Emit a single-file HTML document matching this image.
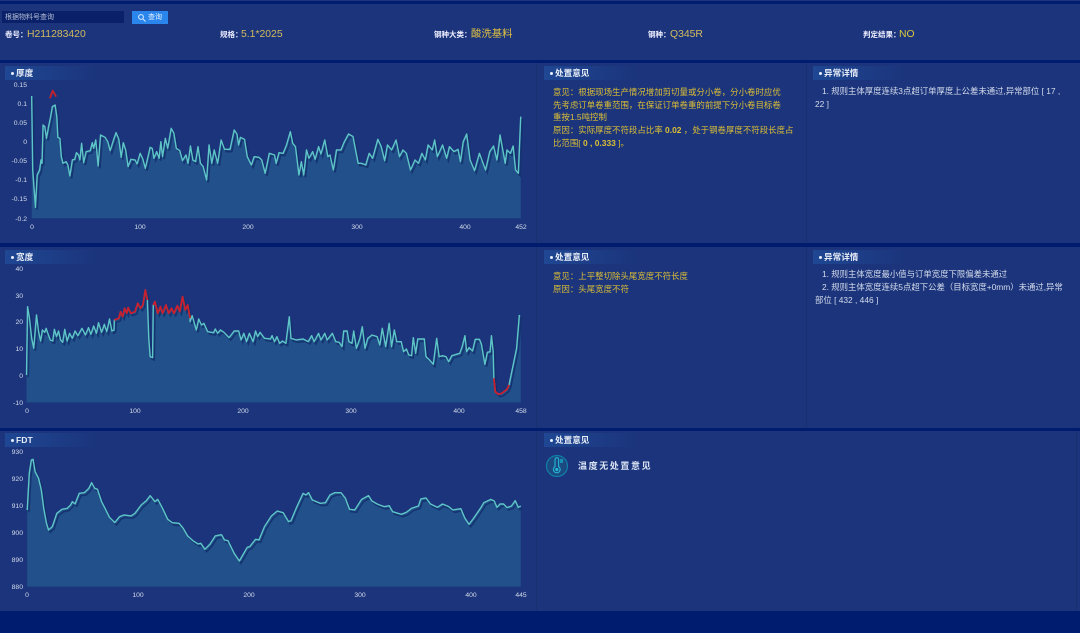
<!DOCTYPE html>
<html><head><meta charset="utf-8"><style>
html,body{margin:0;padding:0;background:#001c6e}
body{width:1080px;height:633px;overflow:hidden;position:relative;font-family:"Liberation Sans","Noto Sans CJK SC",sans-serif;color:#fff}
#w{position:absolute;left:0;top:0;width:1080px;height:633px;filter:blur(.35px)}
div{position:absolute;white-space:nowrap}
.p{background:#1b347b}
.d{background:#17306f;width:1px}
.t{height:14px;background:linear-gradient(90deg,#1f4793,#1b347b);font-size:8.6px;line-height:14px;font-weight:700;color:#e8eef8;padding-left:11px;box-sizing:border-box}
.t:before{content:"";position:absolute;left:6px;top:6px;width:3px;height:3px;border-radius:50%;background:#e8f0ff}
.k{font-size:7.5px;font-weight:700;line-height:12px;top:29px;color:#eef}
.v{font-size:10.4px;line-height:12px;top:29px;color:#d3bb5c}
.y{font-size:8.45px;line-height:12.7px;color:#dcbf36}
.w{font-size:8.4px;line-height:13px;color:#d5dcec}
svg{position:absolute;left:0;top:0}
svg text{font-family:"Liberation Sans",sans-serif;font-size:6.8px;fill:#d5dcec}
polyline{vector-effect:non-scaling-stroke}
.a{fill:#22508a}
.l{fill:none;stroke:#5fc6c8;stroke-width:1.4;stroke-linejoin:round}
.s{fill:none;stroke:#12306c;stroke-width:1.6;opacity:.85}
.r{fill:none;stroke:#c8202e;stroke-width:1.8;stroke-linejoin:round}
</style></head><body><div id="w">
<div class="p" style="left:0;top:0;width:1080px;height:1px"></div>
<div class="p" style="left:0;top:4px;width:1080px;height:56px"></div>
<div class="p" style="left:0;top:63px;width:1080px;height:180px"></div>
<div class="p" style="left:0;top:247px;width:1080px;height:181px"></div>
<div class="p" style="left:0;top:431px;width:1080px;height:180px"></div>
<div class="d" style="left:536px;top:63px;height:180px"></div>
<div class="d" style="left:806px;top:63px;height:180px"></div>
<div class="d" style="left:536px;top:247px;height:181px"></div>
<div class="d" style="left:806px;top:247px;height:181px"></div>
<div class="d" style="left:536px;top:431px;height:180px"></div>
<div class="d" style="left:1076px;top:431px;height:180px"></div>

<div style="left:2px;top:11px;width:122px;height:12px;background:#0a2068;font-size:7px;line-height:13px;color:#b4bfd8;text-indent:3px">根据物料号查询</div>
<div style="left:132px;top:11px;width:36px;height:13px;background:#2a86ec;font-size:7px;line-height:13px;color:#e8f2ff;text-indent:16px">查询
<svg width="10" height="10" style="left:5px;top:2px"><circle cx="4" cy="4" r="2.4" fill="none" stroke="#dcecff"/><path d="M6 6L8.5 8.5" stroke="#dcecff"/></svg></div>
<div class="k" style="left:5px">卷号&#xFF1A;</div><div class="v" style="left:27px">H211283420</div>
<div class="k" style="left:220px">规格&#xFF1A;</div><div class="v" style="left:241px">5.1*2025</div>
<div class="k" style="left:434px">钢种大类&#xFF1A;</div><div class="v" style="left:471px;color:#e3c340">酸洗基料</div>
<div class="k" style="left:648px">钢种&#xFF1A;</div><div class="v" style="left:670px">Q345R</div>
<div class="k" style="left:863px">判定结果&#xFF1A;</div><div class="v" style="left:899px;color:#dcc83c">NO</div>

<div class="t" style="left:5px;top:66px;width:95px">厚度</div>
<div class="t" style="left:544px;top:66px;width:95px">处置意见</div>
<div class="t" style="left:813px;top:66px;width:95px">异常详情</div>
<div class="t" style="left:5px;top:250px;width:95px">宽度</div>
<div class="t" style="left:544px;top:250px;width:95px">处置意见</div>
<div class="t" style="left:813px;top:250px;width:95px">异常详情</div>
<div class="t" style="left:5px;top:433px;width:95px">FDT</div>
<div class="t" style="left:544px;top:433px;width:95px">处置意见</div>

<div class="y" style="left:553px;top:86px">意见&#xFF1A;根据现场生产情况增加剪切量或分小卷&#xFF0C;分小卷时应优<br>先考虑订单卷重范围&#xFF0C;在保证订单卷重的前提下分小卷目标卷<br>重按1.5吨控制<br>原因&#xFF1A;实际厚度不符段占比率 <b>0.02</b> &#xFF0C;处于钢卷厚度不符段长度占<br>比范围[ <b>0 , 0.333</b> ]。</div>
<div class="w" style="left:815px;top:85px">&nbsp;&nbsp;&nbsp;1. 规则主体厚度连续3点超订单厚度上公差未通过,异常部位 [ 17 ,<br>22 ]</div>
<div class="y" style="left:553px;top:270px">意见&#xFF1A;上平整切除头尾宽度不符长度<br>原因&#xFF1A;头尾宽度不符</div>
<div class="w" style="left:815px;top:268px">&nbsp;&nbsp;&nbsp;1. 规则主体宽度最小值与订单宽度下限偏差未通过<br>&nbsp;&nbsp;&nbsp;2. 规则主体宽度连续5点超下公差&#xFF08;目标宽度+0mm&#xFF09;未通过,异常<br>部位 [ 432 , 446 ]</div>
<div style="left:578px;top:460px;font-size:9px;line-height:12px;font-weight:700;letter-spacing:1.6px;color:#dbe4f4">温度无处置意见</div>

<svg width="1080" height="633" viewBox="0 0 1080 633">
<defs>
<polyline id="c1" points="92,288 95,510 103,622 108,525 115,510 119,480 122,490 125,375 130,380 135,415 140,385 147,350 152,320 160,315 165,350 168,412 174,415 178,470 183,490 192,485 197,495 203,528 210,480 217,478 222,458 228,465 232,480 237,430 243,488 250,455 262,452 268,428 272,445 278,420 285,498 292,405 305,412 313,425 320,452 328,425 337,398 345,418 352,472 358,428 365,450 372,500 380,478 392,480 398,492 407,460 415,478 422,505 436,442 442,445 447,475 455,455 462,475 467,425 472,470 480,415 487,445 497,385 505,400 512,445 522,452 530,482 540,465 546,490 553,438 560,480 568,485 575,440 582,490 590,500 600,540 607,435 615,490 622,450 632,490 642,420 652,448 668,448 680,390 688,402 693,435 698,412 710,418 718,470 730,495 738,470 752,472 760,480 770,520 782,460 797,465 802,490 810,458 822,460 832,435 843,395 850,430 858,440 868,525 875,485 882,525 890,450 897,475 908,455 915,478 925,440 932,462 943,420 952,470 958,465 968,510 977,450 990,450 1000,425 1012,402 1025,410 1040,490 1050,490 1062,495 1072,460 1082,475 1097,418 1107,440 1117,482 1125,435 1137,450 1150,420 1160,470 1170,450 1180,460 1192,510 1205,480 1215,490 1225,460 1235,480 1243,435 1255,450 1262,420 1270,470 1285,435 1297,475 1305,440 1318,455 1330,448 1337,485 1345,425 1355,402 1365,480 1378,512 1392,460 1410,510 1422,455 1433,438 1443,480 1452,405 1467,490 1472,450 1482,460 1490,438 1497,510 1505,520 1512,350"/>
<polyline id="c2" points="77,390 80,185 85,215 92,280 98,310 106,210 112,260 118,288 123,255 130,262 134,250 140,268 146,285 153,288 158,253 164,275 170,258 176,285 182,292 188,253 195,288 202,265 210,280 218,258 226,272 238,250 248,270 257,248 264,268 272,243 280,265 286,233 295,262 303,238 310,260 318,222 325,258 331,255 332,225 345,220 350,200 356,215 362,190 368,205 372,188 380,205 392,200 400,175 408,190 415,180 422,135 428,165 432,280 436,335 443,338 445,180 450,170 458,205 466,185 472,205 482,180 490,205 498,190 505,205 515,182 522,200 530,155 538,195 545,180 552,220 552,230 558,212 570,255 577,222 585,240 592,235 603,260 620,263 625,252 632,265 640,255 650,262 665,278 680,258 693,258 700,285 708,265 716,290 724,265 735,290 742,258 748,275 755,262 768,280 785,282 790,272 797,290 804,275 812,295 820,288 830,295 840,215 845,280 860,285 880,282 895,290 905,272 912,290 925,265 932,285 943,265 950,285 965,265 975,290 985,292 993,305 998,258 1008,258 1013,290 1022,295 1027,258 1035,310 1045,280 1052,245 1060,310 1068,280 1080,270 1095,275 1103,300 1110,250 1120,305 1130,235 1137,305 1145,255 1152,290 1165,290 1172,320 1180,312 1187,330 1195,332 1200,278 1207,325 1213,282 1232,282 1237,335 1247,345 1258,358 1268,280 1275,335 1285,332 1295,335 1303,350 1312,332 1325,328 1335,325 1342,305 1350,272 1355,320 1362,308 1372,318 1380,283 1392,283 1398,298 1408,358 1415,322 1423,320 1427,272 1432,320 1434,400 1438,440 1447,448 1457,445 1472,433 1478,420 1490,360 1500,310 1508,210"/>
<polyline id="c3" points="79,240 85,130 91,90 96,88 102,125 112,145 120,180 127,235 135,280 141,300 152,290 165,250 180,238 195,235 205,225 210,215 218,222 230,190 245,188 258,175 266,158 275,175 283,178 295,215 305,235 318,262 333,278 347,260 360,255 380,258 392,250 410,225 425,212 436,197 450,215 458,208 472,235 487,268 500,278 520,280 532,295 545,318 560,332 575,342 583,340 595,358 610,342 625,318 643,314 652,330 662,332 680,370 695,393 705,375 718,352 725,350 742,328 752,330 768,290 788,258 805,243 822,248 838,275 845,272 862,230 880,190 888,195 896,188 907,210 930,220 945,218 958,195 972,188 990,188 1003,205 1015,238 1030,240 1050,208 1070,197 1080,213 1095,222 1115,230 1130,227 1140,245 1165,253 1180,247 1195,235 1215,228 1222,207 1237,204 1250,222 1270,232 1285,222 1303,230 1315,240 1338,236 1350,265 1362,283 1375,265 1395,235 1405,218 1425,208 1435,213 1443,232 1452,222 1462,222 1472,233 1485,228 1496,212 1505,232 1512,228"/>
</defs>

<g transform="scale(.3444,.3333)">
<polygon class="a" points="92,655 92,288 95,510 103,622 108,525 115,510 119,480 122,490 125,375 130,380 135,415 140,385 147,350 152,320 160,315 165,350 168,412 174,415 178,470 183,490 192,485 197,495 203,528 210,480 217,478 222,458 228,465 232,480 237,430 243,488 250,455 262,452 268,428 272,445 278,420 285,498 292,405 305,412 313,425 320,452 328,425 337,398 345,418 352,472 358,428 365,450 372,500 380,478 392,480 398,492 407,460 415,478 422,505 436,442 442,445 447,475 455,455 462,475 467,425 472,470 480,415 487,445 497,385 505,400 512,445 522,452 530,482 540,465 546,490 553,438 560,480 568,485 575,440 582,490 590,500 600,540 607,435 615,490 622,450 632,490 642,420 652,448 668,448 680,390 688,402 693,435 698,412 710,418 718,470 730,495 738,470 752,472 760,480 770,520 782,460 797,465 802,490 810,458 822,460 832,435 843,395 850,430 858,440 868,525 875,485 882,525 890,450 897,475 908,455 915,478 925,440 932,462 943,420 952,470 958,465 968,510 977,450 990,450 1000,425 1012,402 1025,410 1040,490 1050,490 1062,495 1072,460 1082,475 1097,418 1107,440 1117,482 1125,435 1137,450 1150,420 1160,470 1170,450 1180,460 1192,510 1205,480 1215,490 1225,460 1235,480 1243,435 1255,450 1262,420 1270,470 1285,435 1297,475 1305,440 1318,455 1330,448 1337,485 1345,425 1355,402 1365,480 1378,512 1392,460 1410,510 1422,455 1433,438 1443,480 1452,405 1467,490 1472,450 1482,460 1490,438 1497,510 1505,520 1512,350 1512,655"/>
<use href="#c1" class="s" transform="translate(5,7)"/>
<use href="#c1" class="l"/>
<polyline class="r" points="145,295 153,272 163,290"/>
</g>

<g transform="translate(0,245) scale(.3444,.3333)">
<polygon class="a" points="77,472 77,390 80,185 85,215 92,280 98,310 106,210 112,260 118,288 123,255 130,262 134,250 140,268 146,285 153,288 158,253 164,275 170,258 176,285 182,292 188,253 195,288 202,265 210,280 218,258 226,272 238,250 248,270 257,248 264,268 272,243 280,265 286,233 295,262 303,238 310,260 318,222 325,258 331,255 332,225 345,220 350,200 356,215 362,190 368,205 372,188 380,205 392,200 400,175 408,190 415,180 422,135 428,165 432,280 436,335 443,338 445,180 450,170 458,205 466,185 472,205 482,180 490,205 498,190 505,205 515,182 522,200 530,155 538,195 545,180 552,220 552,230 558,212 570,255 577,222 585,240 592,235 603,260 620,263 625,252 632,265 640,255 650,262 665,278 680,258 693,258 700,285 708,265 716,290 724,265 735,290 742,258 748,275 755,262 768,280 785,282 790,272 797,290 804,275 812,295 820,288 830,295 840,215 845,280 860,285 880,282 895,290 905,272 912,290 925,265 932,285 943,265 950,285 965,265 975,290 985,292 993,305 998,258 1008,258 1013,290 1022,295 1027,258 1035,310 1045,280 1052,245 1060,310 1068,280 1080,270 1095,275 1103,300 1110,250 1120,305 1130,235 1137,305 1145,255 1152,290 1165,290 1172,320 1180,312 1187,330 1195,332 1200,278 1207,325 1213,282 1232,282 1237,335 1247,345 1258,358 1268,280 1275,335 1285,332 1295,335 1303,350 1312,332 1325,328 1335,325 1342,305 1350,272 1355,320 1362,308 1372,318 1380,283 1392,283 1398,298 1408,358 1415,322 1423,320 1427,272 1432,320 1434,400 1438,440 1447,448 1457,445 1472,433 1478,420 1490,360 1500,310 1508,210 1512,210 1512,472"/>
<use href="#c2" class="s" transform="translate(5,7)"/>
<use href="#c2" class="l"/>
<polyline class="r" points="332,225 345,220 350,200 356,215 362,190 368,205 372,188 380,205 392,200 400,175 408,190 415,180 422,135 428,165"/>
<polyline class="r" points="445,180 450,170 458,205 466,185 472,205 482,180 490,205 498,190 505,205 515,182 522,200 530,155 538,195 545,180 552,220"/>
<polyline class="r" points="1434,400 1438,440 1447,448 1457,445 1472,433 1478,420"/>
</g>

<g transform="translate(0,430) scale(.3444,.3333)">
<polygon class="a" points="79,470 79,240 85,130 91,90 96,88 102,125 112,145 120,180 127,235 135,280 141,300 152,290 165,250 180,238 195,235 205,225 210,215 218,222 230,190 245,188 258,175 266,158 275,175 283,178 295,215 305,235 318,262 333,278 347,260 360,255 380,258 392,250 410,225 425,212 436,197 450,215 458,208 472,235 487,268 500,278 520,280 532,295 545,318 560,332 575,342 583,340 595,358 610,342 625,318 643,314 652,330 662,332 680,370 695,393 705,375 718,352 725,350 742,328 752,330 768,290 788,258 805,243 822,248 838,275 845,272 862,230 880,190 888,195 896,188 907,210 930,220 945,218 958,195 972,188 990,188 1003,205 1015,238 1030,240 1050,208 1070,197 1080,213 1095,222 1115,230 1130,227 1140,245 1165,253 1180,247 1195,235 1215,228 1222,207 1237,204 1250,222 1270,232 1285,222 1303,230 1315,240 1338,236 1350,265 1362,283 1375,265 1395,235 1405,218 1425,208 1435,213 1443,232 1452,222 1462,222 1472,233 1485,228 1496,212 1505,232 1512,228 1512,470"/>
<use href="#c3" class="s" transform="translate(5,7)"/>
<use href="#c3" class="l"/>
</g>

<g text-anchor="end">
<text x="27" y="87">0.15</text><text x="27" y="106">0.1</text><text x="27" y="125">0.05</text><text x="27" y="144">0</text><text x="27" y="163">-0.05</text><text x="27" y="182">-0.1</text><text x="27" y="201">-0.15</text><text x="27" y="221">-0.2</text>
<text x="23" y="271">40</text><text x="23" y="298">30</text><text x="23" y="324">20</text><text x="23" y="351">10</text><text x="23" y="378">0</text><text x="23" y="405">-10</text>
<text x="23" y="454">930</text><text x="23" y="481">920</text><text x="23" y="508">910</text><text x="23" y="535">900</text><text x="23" y="562">890</text><text x="23" y="589">880</text>
</g>
<g text-anchor="middle">
<text x="32" y="229">0</text><text x="140" y="229">100</text><text x="248" y="229">200</text><text x="357" y="229">300</text><text x="465" y="229">400</text><text x="521" y="229">452</text>
<text x="27" y="413">0</text><text x="135" y="413">100</text><text x="243" y="413">200</text><text x="351" y="413">300</text><text x="459" y="413">400</text><text x="521" y="413">458</text>
<text x="27" y="597">0</text><text x="138" y="597">100</text><text x="249" y="597">200</text><text x="360" y="597">300</text><text x="471" y="597">400</text><text x="521" y="597">445</text>
</g>

<circle cx="557" cy="466" r="10.5" fill="#1a4a80" stroke="#0f7fa8" stroke-width="1.2"/>
<path d="M555 459.5a1.8 1.8 0 0 1 3.6 0v7a3.4 3.4 0 1 1-3.6 0z" fill="none" stroke="#25b6d6" stroke-width="1.1"/>
<circle cx="556.8" cy="469.5" r="1.6" fill="#25b6d6"/>
<rect x="560" y="459" width="3" height="4" fill="#1a8fb5"/>
</svg>
</div></body></html>
